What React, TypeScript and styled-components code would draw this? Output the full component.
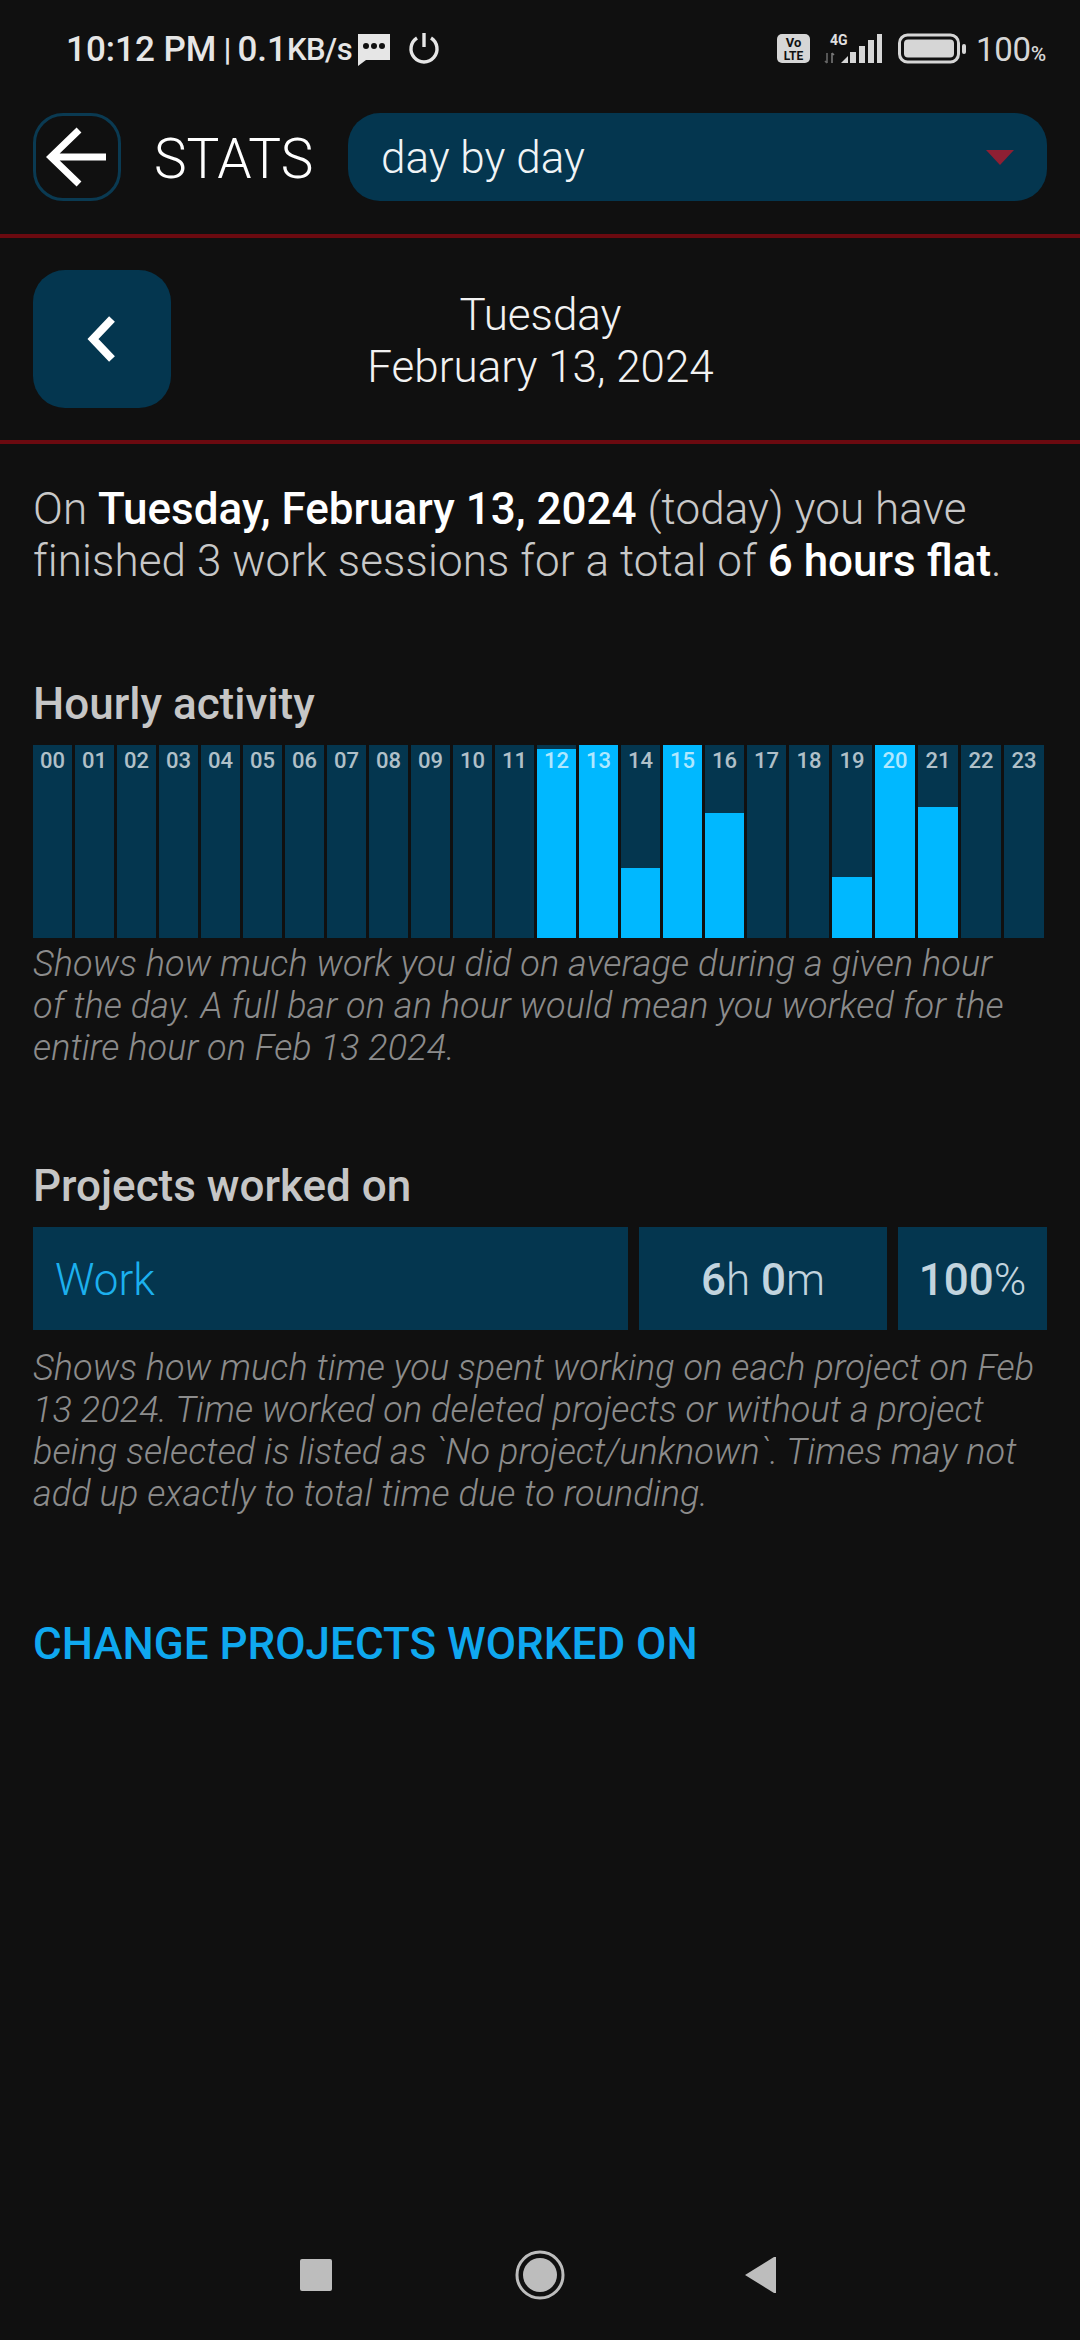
import React from 'react';
import styled, { createGlobalStyle } from 'styled-components';

const Global = createGlobalStyle`
  html, body { margin: 0; padding: 0; background: #101010; }
  * { box-sizing: border-box; }
`;

const Page = styled.div`
  width: 1080px; height: 2340px; background: #101010; color: #fff;
  font-family: Roboto, "Noto Sans", sans-serif; display: flex; flex-direction: column;
  overflow: hidden;
`;
const StatusBar = styled.div`
  height: 113px; padding: 29px 34px 0 66px; display: flex; align-items: flex-start; justify-content: space-between;
`;
const StatusLeft = styled.div`
  display: flex; align-items: center; height: 40px; color: #e6e6e6; font-size: 35px; font-weight: 500; white-space: nowrap;
`;
const StatusSep = styled.span`font-size: 32px; margin: 0 6px 0 7px;`;
const StatusUnit = styled.span`font-size: 31px; letter-spacing: -0.5px;`;
const StatusRight = styled.div`
  display: flex; align-items: center; height: 40px; color: #d6d6d6;
`;
const BatteryText = styled.span`font-size: 33px; font-weight: 400; letter-spacing: -0.3px; margin-left: 8px;`;
const Percent = styled.span`font-size: 21px; font-weight: 500;`;

const Header = styled.div`
  height: 125px; padding: 0 33px; display: flex; align-items: flex-start; border-bottom: 4px solid #6b0a10;
`;
const BackButton = styled.div`
  width: 88px; height: 88px; border: 3px solid #0a3a52; border-radius: 30px; display: flex; align-items: center; justify-content: center; flex: none;
`;
const Title = styled.div`
  font-size: 55px; font-weight: 300; line-height: 92px; margin-left: 33px; width: 194px; flex: none;
`;
const Dropdown = styled.div`
  flex: 1; height: 88px; border-radius: 32px; background: #04364f; display: flex; align-items: center; justify-content: space-between;
  padding: 2px 33px 0; font-size: 44px; font-weight: 300; color: #f0f4f6;
`;
const DayBar = styled.div`
  height: 206px; padding: 32px 33px 0; display: flex; align-items: flex-start; border-bottom: 4px solid #6b0a10;
`;
const PrevButton = styled.div`
  width: 138px; height: 138px; border-radius: 32px; background: #04364f; display: flex; align-items: center; justify-content: center; flex: none;
`;
const DateText = styled.div`
  flex: 1; margin-right: 137px; padding-top: 19px; text-align: center; font-size: 44px; line-height: 52px; font-weight: 300; color: #f2f2f2;
`;
const Content = styled.div`
  padding: 39px 33px 0; flex: 1; display: flex; flex-direction: column;
`;
const Summary = styled.p`
  margin: 0; font-size: 44px; line-height: 52px; font-weight: 300; color: #c8c8c8; letter-spacing: .11px;
  b { font-weight: 500; color: #fff; letter-spacing: 0; }
`;
const Heading = styled.h2`
  margin: 0; font-size: 44px; line-height: 48px; font-weight: 500; color: #c6c6c6;
`;
const Section = styled.section<{ $top: number }>`
  margin-top: ${p => p.$top}px;
`;
const Bars = styled.div`
  margin-top: 17px; display: grid; grid-template-columns: repeat(18, 39px) repeat(6, 40px); column-gap: 3px; height: 193px;
`;
const Bar = styled.div`
  position: relative; background: #04364f; display: flex; align-items: flex-end;
`;
const BarFill = styled.div`
  width: 100%; background: #00b8ff;
`;
const BarLabel = styled.span`
  position: absolute; top: 4px; left: 0; right: 0; text-align: center; font-size: 22px; line-height: 24px; font-weight: 500; color: rgba(255,255,255,.7);
`;
const Caption = styled.p<{ $top: number }>`
  margin: ${p => p.$top}px 0 0; font-size: 36px; line-height: 42px; font-weight: 300; font-style: italic; color: #8c8c8c; letter-spacing: .1px;
`;
const ProjectRow = styled.div`
  margin-top: 17px; display: grid; grid-template-columns: 595px 248px 149px; column-gap: 11px; width: 1014px; height: 103px;
`;
const Cell = styled.div<{ $right?: boolean }>`
  background: #04364f; display: flex; align-items: center; font-size: 44px; font-weight: 300; color: #c2d4de;
  justify-content: ${p => (p.$right ? 'center' : 'flex-start')};
  padding: ${p => (p.$right ? '3px 0 0' : '3px 22px 0')};
  b { font-weight: 500; }
`;
const ProjectName = styled.span`color: #1cb0ee;`;
const ActionLink = styled.div`
  margin-top: 105px; font-size: 44px; line-height: 48px; font-weight: 500; color: #0fa8ef;
`;
const NavBar = styled.div`
  height: 95px; display: flex; justify-content: center; align-items: flex-start; flex: none;
`;
const NavSlot = styled.div`
  width: 224px; height: 60px; display: flex; align-items: center; justify-content: center;
`;

const fills: Record<number, number> = { 12: 189, 13: 193, 14: 70, 15: 193, 16: 125, 19: 61, 20: 193, 21: 131 };
const hours = Array.from({ length: 24 }, (_, i) => i);

export default function App() {
  return (
    <Page>
      <Global />
      <StatusBar>
        <StatusLeft>
          10:12 PM<StatusSep>|</StatusSep>0.1<StatusUnit>KB/s</StatusUnit>
          <svg width="36" height="34" viewBox="0 0 36 34" style={{ marginLeft: 4 }}>
            <path d="M2 2h32v26H10l-8 6z" fill="#e6e6e6" />
            <circle cx="10" cy="14" r="3" fill="#101010" /><circle cx="18" cy="14" r="3" fill="#101010" /><circle cx="26" cy="14" r="3" fill="#101010" />
          </svg>
          <svg width="32" height="32" viewBox="0 0 32 32" style={{ marginLeft: 16, marginTop: -2 }}>
            <path d="M9 6a13 13 0 1 0 14 0" fill="none" stroke="#e6e6e6" strokeWidth="3.4" />
            <path d="M16 1v14" stroke="#e6e6e6" strokeWidth="3.4" />
          </svg>
        </StatusLeft>
        <StatusRight>
          <svg width="34" height="30" viewBox="0 0 34 30">
            <rect width="33" height="29" rx="5" fill="#d6d6d6" />
            <text x="16.5" y="13" textAnchor="middle" fontSize="13" fontWeight="700" fill="#101010" fontFamily="Roboto">Vo</text>
            <text x="16.5" y="26" textAnchor="middle" fontSize="12" fontWeight="700" fill="#101010" fontFamily="Roboto">LTE</text>
          </svg>
          <svg width="60" height="32" viewBox="0 0 60 32" style={{ marginLeft: 13 }}>
            <text x="6" y="12" fontSize="14" fontWeight="700" fill="#e0e0e0" fontFamily="Roboto">4G</text>
            <path d="M3 30V20M3 30l-2-2" stroke="#666" strokeWidth="1.6" fill="none" />
            <path d="M8 20v10M8 20l2 2" stroke="#777" strokeWidth="1.6" fill="none" />
            <path d="M17 30h7v-7z" fill="#d6d6d6" />
            <rect x="26" y="19" width="6" height="11" fill="#d6d6d6" />
            <rect x="35" y="13" width="6" height="17" fill="#d6d6d6" />
            <rect x="44" y="7" width="6" height="23" fill="#d6d6d6" />
            <rect x="53" y="1" width="5" height="29" fill="#d6d6d6" />
          </svg>
          <svg width="70" height="32" viewBox="0 0 70 32" style={{ marginLeft: 14 }}>
            <rect x="1.5" y="2" width="59" height="27" rx="8" fill="none" stroke="#d6d6d6" strokeWidth="3" />
            <rect x="6" y="6.5" width="50" height="18" rx="4" fill="#d6d6d6" />
            <rect x="64" y="11" width="4" height="10" rx="2" fill="#d6d6d6" />
          </svg>
          <BatteryText>100<Percent>%</Percent></BatteryText>
        </StatusRight>
      </StatusBar>

      <Header>
        <BackButton>
          <svg width="62" height="62" viewBox="0 0 62 62">
            <path d="M60 31H5M33 4L5 31l28 27" fill="none" stroke="#fff" strokeWidth="7" />
          </svg>
        </BackButton>
        <Title>STATS</Title>
        <Dropdown>
          day by day
          <svg width="28" height="16" viewBox="0 0 28 16"><path d="M0 0h28L14 15z" fill="#8e1f33" /></svg>
        </Dropdown>
      </Header>

      <DayBar>
        <PrevButton>
          <svg width="36" height="48" viewBox="0 0 36 48"><path d="M28 4L9 24l19 20" fill="none" stroke="#fff" strokeWidth="8" /></svg>
        </PrevButton>
        <DateText>Tuesday<br />February 13, 2024</DateText>
      </DayBar>

      <Content>
        <Summary>
          On <b>Tuesday, February 13, 2024</b> (today) you have finished 3 work sessions for a total of <b>6 hours flat</b>.
        </Summary>

        <Section $top={93}>
          <Heading>Hourly activity</Heading>
          <Bars>
            {hours.map(h => (
              <Bar key={h}>
                {fills[h] ? <BarFill style={{ height: fills[h] }} /> : null}
                <BarLabel>{String(h).padStart(2, '0')}</BarLabel>
              </Bar>
            ))}
          </Bars>
          <Caption $top={5}>Shows how much work you did on average during a given hour<br />of the day. A full bar on an hour would mean you worked for the entire hour on Feb 13 2024.</Caption>
        </Section>

        <Section $top={93}>
          <Heading>Projects worked on</Heading>
          <ProjectRow>
            <Cell><ProjectName>Work</ProjectName></Cell>
            <Cell $right><span><b>6</b>h <b>0</b>m</span></Cell>
            <Cell $right><span><b>100</b>%</span></Cell>
          </ProjectRow>
          <Caption $top={17}>Shows how much time you spent working on each project on Feb 13 2024. Time worked on deleted projects or without a project being selected is listed as `No project/unknown`. Times may not add up exactly to total time due to rounding.</Caption>
        </Section>

        <ActionLink>CHANGE PROJECTS WORKED ON</ActionLink>
      </Content>

      <NavBar>
        <NavSlot>
          <svg width="32" height="32" viewBox="0 0 32 32"><rect width="32" height="32" rx="2" fill="#bdbdbd" /></svg>
        </NavSlot>
        <NavSlot>
          <svg width="50" height="50" viewBox="0 0 50 50">
            <circle cx="25" cy="25" r="23" fill="none" stroke="#bdbdbd" strokeWidth="3" />
            <circle cx="25" cy="25" r="17" fill="#bdbdbd" />
          </svg>
        </NavSlot>
        <NavSlot>
          <svg width="32" height="38" viewBox="0 0 32 38" style={{ marginRight: 8 }}><path d="M1 19L30 1h2v36h-2z" fill="#bdbdbd" /></svg>
        </NavSlot>
      </NavBar>
    </Page>
  );
}
